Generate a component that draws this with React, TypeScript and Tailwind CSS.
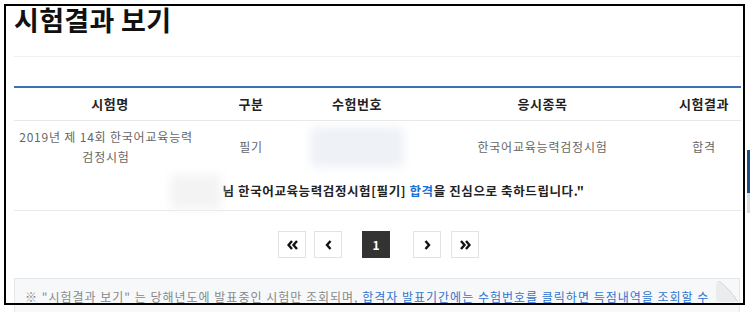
import { ReactNode } from 'react';

function PageButton({ children, active = false, className = '' }: { children: ReactNode; active?: boolean; className?: string }) {
  return (
    <button
      className={
        'flex h-[27px] w-[28px] items-center justify-center border text-[12px] font-bold ' +
        (active ? 'border-[#333] bg-[#333] text-white ' : 'border-[#e3e3e3] bg-white text-[#111] ') +
        className
      }
    >
      {children}
    </button>
  );
}

function Chevron({ dir, double = false }: { dir: 'left' | 'right'; double?: boolean }) {
  if (double) {
    const pts = dir === 'left' ? ['5,1 1.5,5 5,9', '10,1 6.5,5 10,9'] : ['1,1 4.5,5 1,9', '6,1 9.5,5 6,9'];
    return (
      <svg width="11" height="10" viewBox="0 0 11 10" fill="none">
        <polyline points={pts[0]} stroke="#111" strokeWidth="2.4" />
        <polyline points={pts[1]} stroke="#111" strokeWidth="2.4" />
      </svg>
    );
  }
  return (
    <svg width="7" height="10" viewBox="-0.5 0 7 10" fill="none">
      <polyline points={dir === 'left' ? '5,1 1.5,5 5,9' : '1,1 4.5,5 1,9'} stroke="#111" strokeWidth="2.4" />
    </svg>
  );
}

export default function App() {
  return (
    <div className="relative h-[312px] w-[750px] overflow-hidden bg-white font-['Noto_Sans_CJK_KR','Noto_Sans',sans-serif]">
      <div className="pl-[14px] pr-[9px]">
        {/* Title */}
        <h1 className="pt-[5px] text-[27px] font-bold leading-[30px] tracking-[0.3px] text-[#111]">시험결과 보기</h1>
        <div className="mt-[21px] h-px bg-[#efefef]" />

        {/* Result table */}
        <div className="mt-[29px] border-t-2 border-[#3a72b5]">
          <div className="grid h-[33px] grid-cols-[192px_90px_122px_249px_74px] items-center border-b border-[#e8e8e8] text-center text-[13px] font-bold tracking-[0.6px] text-[#222]">
            <div>시험명</div>
            <div>구분</div>
            <div>수험번호</div>
            <div>응시종목</div>
            <div>시험결과</div>
          </div>
          <div className="grid h-[52px] grid-cols-[192px_90px_122px_249px_74px] items-center text-center text-[12px] leading-[20px] tracking-[0.8px] text-[#666]">
            <div className="pr-[8px]">
              2019년 제 14회 한국어교육능력
              <br />
              검정시험
            </div>
            <div>필기</div>
            <div className="flex justify-center">
              <div className="h-[40px] w-[94px] rounded-md bg-[#eef1f6] blur-[5px]" />
            </div>
            <div>한국어교육능력검정시험</div>
            <div>합격</div>
          </div>
          <div className="flex h-[38px] items-center justify-center border-b border-[#e8e8e8] text-[12.5px] font-bold tracking-[0.6px] text-[#222]">
            <span className="mr-[2px] inline-block h-[34px] w-[50px] bg-[#f3f3f3] blur-[5px]" />
            <span>
              님 한국어교육능력검정시험[필기] <span className="text-[#1b6fd6]">합격</span>을 진심으로 축하드립니다."
            </span>
          </div>
        </div>

        {/* Pagination */}
        <div className="mt-[20px] flex items-center justify-center pl-[2px]">
          <PageButton>
            <Chevron dir="left" double />
          </PageButton>
          <PageButton className="ml-[8px]">
            <Chevron dir="left" />
          </PageButton>
          <PageButton active className="ml-[20px]">
            1
          </PageButton>
          <PageButton className="ml-[23px]">
            <Chevron dir="right" />
          </PageButton>
          <PageButton className="ml-[10px]">
            <Chevron dir="right" double />
          </PageButton>
        </div>

        {/* Notice */}
        <div className="relative mt-[20px] mr-[1px] border border-[#e6e6e6] bg-[#f7f8fa] px-[10px] pt-[7px] text-[12px] leading-[22px] tracking-[1px] text-[#888]">
          <p>
            ※ "시험결과 보기" 는 당해년도에 발표중인 시험만 조회되며,{' '}
            <span className="text-[#2f74d0]">합격자 발표기간에는 수험번호를 클릭하면 득점내역을 조회할 수</span>
          </p>
          <p className="pl-[16px]">
            <span className="text-[#2f74d0]">있습니다.</span> 발표기간이 지난 시험은 조회되지 않습니다.
          </p>
          <svg className="absolute right-[1px] top-[2px]" width="22" height="21" viewBox="0 0 22 21">
            <path d="M3 0 Q0 0 0 4 L0 18 Q0 21 3 21 L22 21 Q14 8 3 0 Z" fill="#ebecee" />
            <path d="M3 0 Q14 8 22 21" fill="none" stroke="#d2d4d8" strokeWidth="1" />
          </svg>
        </div>
      </div>

      {/* Scrollbar sliver at the right edge */}
      <div className="absolute right-0 top-[150px] flex w-[3px] flex-col">
        <div className="h-[43px] bg-[#1f4f80]" />
        <div className="h-[20px] bg-[#dcdcdc]" />
      </div>

      {/* Black annotation frame */}
      <div className="pointer-events-none absolute left-[4px] top-[4px] h-[301px] w-[741px] border-2 border-black" />
    </div>
  );
}
